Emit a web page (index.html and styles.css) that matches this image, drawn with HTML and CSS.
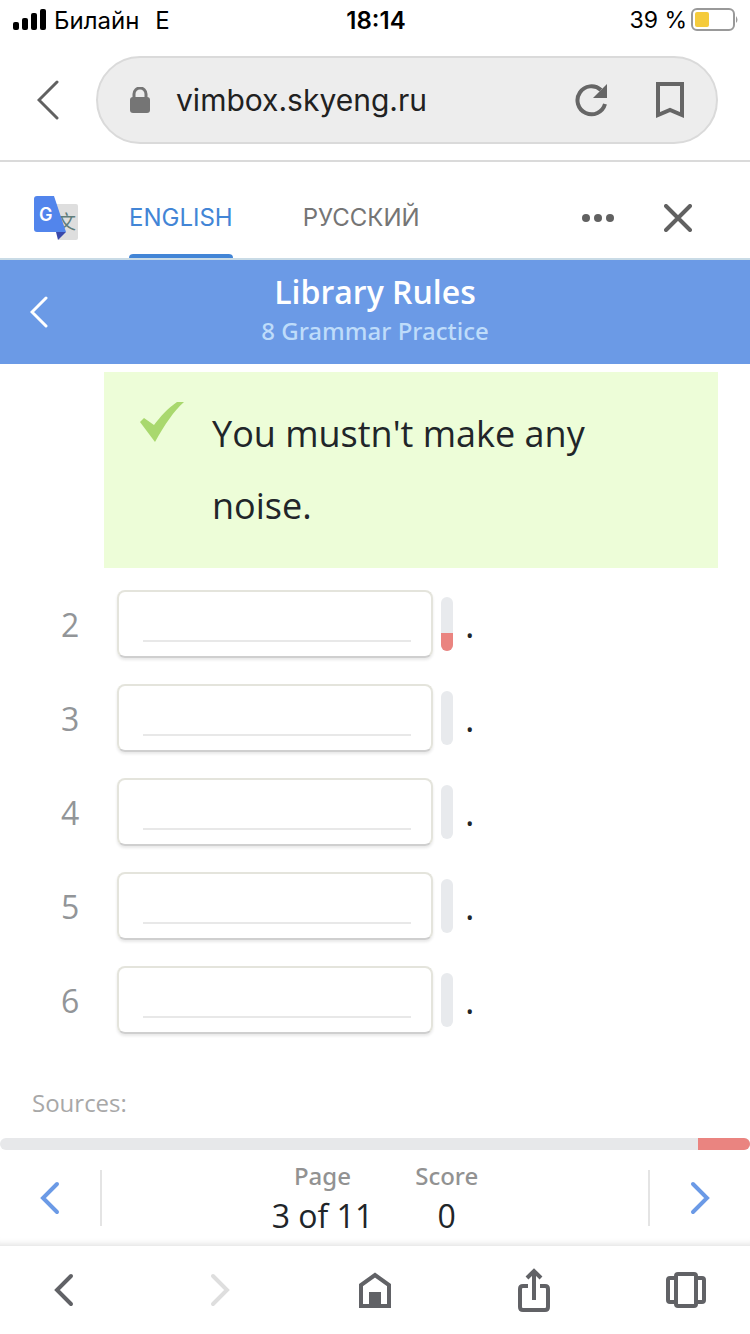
FILE: index.html
```html
<!DOCTYPE html>
<html lang="en">

<head>
    <meta charset="UTF-8">
    <meta name="viewport" content="width=device-width, initial-scale=1.0">
    <title>Library Rules</title>
    <link rel="stylesheet" href="styles.css">
</head>

<body>
    <div class="status">
        <div class="carrier">
            <svg width="34" height="22" viewBox="0 0 34 22">
                <rect x="0" y="13" width="6" height="8" rx="2" />
                <rect x="9" y="9" width="6" height="12" rx="2" />
                <rect x="18" y="4" width="6" height="17" rx="2" />
                <rect x="27" y="0" width="6" height="21" rx="2" />
            </svg>
            <span>Билайн</span>
            <span class="network">E</span>
        </div>
        <time>18:14</time>
        <div class="battery">
            <span>39 %</span>
            <svg width="48" height="24" viewBox="0 0 48 24">
                <rect x="1" y="1" width="42" height="21" rx="5" fill="none" stroke="#999" stroke-width="2" />
                <rect x="4" y="4" width="14" height="15" rx="2" fill="#f5cb3c" />
                <path d="M45 8q3 4 0 7z" fill="#999" />
            </svg>
        </div>
    </div>

    <header class="browser">
        <button class="back" aria-label="Back">
            <svg width="22" height="40" viewBox="0 0 22 40">
                <path d="M20 2 2 20l18 18" fill="none" stroke="#616161" stroke-width="3" stroke-linecap="round" />
            </svg>
        </button>
        <div class="address">
            <svg width="20" height="26" viewBox="0 0 20 26">
                <path d="M4 12V7a6 6 0 0 1 12 0v5" fill="none" stroke="#757575" stroke-width="3" />
                <rect x="0" y="10" width="20" height="16" rx="3" fill="#757575" />
            </svg>
            <input type="text" value="vimbox.skyeng.ru" aria-label="Address">
            <button aria-label="Reload">
                <svg width="34" height="34" viewBox="0 0 34 34">
                    <path d="M31 21A14 14 0 1 1 27 7" fill="none" stroke="#666" stroke-width="4" />
                    <path d="M33 1v14H19z" fill="#666" />
                </svg>
            </button>
            <button aria-label="Add bookmark">
                <svg width="28" height="36" viewBox="0 0 28 36">
                    <path d="M2 2h24v31l-12-5-12 5z" fill="none" stroke="#666" stroke-width="4" />
                </svg>
            </button>
        </div>
    </header>

    <div class="translate">
        <svg class="logo" width="44" height="44" viewBox="0 0 44 44">
            <path d="M14 8h28q2 0 2 2v32q0 2-2 2H25z" fill="#dedede" />
            <text x="23" y="33" class="logo-zh">文</text>
            <path d="M22 36h10l-8 8z" fill="#3949ab" />
            <path d="M3 0h17l12 36H3q-3 0-3-3V3q0-3 3-3z" fill="#5285ec" />
            <text x="5" y="25" class="logo-g">G</text>
        </svg>
        <nav class="langs">
            <a href="#en" class="active">ENGLISH</a>
            <a href="#ru">РУССКИЙ</a>
        </nav>
        <button class="more" aria-label="More">
            <svg width="32" height="8" viewBox="0 0 32 8" fill="#616161">
                <circle cx="4" cy="4" r="4" />
                <circle cx="16" cy="4" r="4" />
                <circle cx="28" cy="4" r="4" />
            </svg>
        </button>
        <button aria-label="Close">
            <svg width="28" height="28" viewBox="0 0 28 28">
                <path d="M2 2l24 24M26 2 2 26" stroke="#616161" stroke-width="4" stroke-linecap="round" />
            </svg>
        </button>
    </div>

    <div class="lesson">
        <a href="#lessons" aria-label="All lessons">
            <svg width="18" height="32" viewBox="0 0 18 32">
                <path d="M16 2 2 16l14 14" fill="none" stroke="#fff" stroke-width="3" stroke-linecap="round" />
            </svg>
        </a>
        <div class="titles">
            <h1>Library Rules</h1>
            <h2>8 Grammar Practice</h2>
        </div>
    </div>

    <main>
        <div class="answer">
            <svg width="44" height="40" viewBox="0 0 44 40">
                <path d="M0 20l4-4 10 7C20 15 28 6 37 0h7C34 9 25 22 15 40z" fill="#a9d86e" />
            </svg>
            <p>You mustn't make any noise.</p>
        </div>

        <div class="items">
            <div class="item">
                <label for="q2">2</label>
                <div class="field"><input type="text" id="q2"></div>
                <div class="meter"><div style="height: 34%"></div></div>
                <span>.</span>
            </div>
            <div class="item">
                <label for="q3">3</label>
                <div class="field"><input type="text" id="q3"></div>
                <div class="meter"></div>
                <span>.</span>
            </div>
            <div class="item">
                <label for="q4">4</label>
                <div class="field"><input type="text" id="q4"></div>
                <div class="meter"></div>
                <span>.</span>
            </div>
            <div class="item">
                <label for="q5">5</label>
                <div class="field"><input type="text" id="q5"></div>
                <div class="meter"></div>
                <span>.</span>
            </div>
            <div class="item">
                <label for="q6">6</label>
                <div class="field"><input type="text" id="q6"></div>
                <div class="meter"></div>
                <span>.</span>
            </div>
        </div>

        <p class="sources">Sources:</p>
    </main>

    <div class="progress"><div style="width: 7%"></div></div>

    <div class="pager">
        <button aria-label="Previous page">
            <svg width="20" height="34" viewBox="0 0 20 34">
                <path d="M17 3 3 17l14 14" fill="none" stroke="#6b9ae6" stroke-width="4" stroke-linecap="round" />
            </svg>
        </button>
        <dl>
            <div>
                <dt>Page</dt>
                <dd>3 of 11</dd>
            </div>
            <div>
                <dt>Score</dt>
                <dd>0</dd>
            </div>
        </dl>
        <button aria-label="Next page">
            <svg width="20" height="34" viewBox="0 0 20 34">
                <path d="M3 3l14 14L3 31" fill="none" stroke="#6b9ae6" stroke-width="4" stroke-linecap="round" />
            </svg>
        </button>
    </div>

    <nav class="toolbar">
        <button aria-label="Back">
            <svg width="44" height="44" viewBox="0 0 44 44">
                <path d="M29 8 15 22l14 14" stroke-linecap="round" />
            </svg>
        </button>
        <button class="off" aria-label="Forward" disabled>
            <svg width="44" height="44" viewBox="0 0 44 44">
                <path d="M15 8l14 14-14 14" stroke-linecap="round" />
            </svg>
        </button>
        <button aria-label="Home">
            <svg width="44" height="44" viewBox="0 0 44 44">
                <path d="M8 38V17L22 7l14 10v21z" />
                <path d="M16 24h12v14H16z" fill="#616266" stroke="none" />
            </svg>
        </button>
        <button aria-label="Share">
            <svg width="44" height="44" viewBox="-3 0 44 44">
                <path d="M16 18h-5q-3 0-3 3v18q0 3 3 3h22q3 0 3-3V21q0-3-3-3h-5" />
                <path d="M22 32V4M15 10l7-7 7 7" />
            </svg>
        </button>
        <button aria-label="Tabs">
            <svg width="44" height="44" viewBox="0 0 44 44">
                <rect x="12" y="6" width="20" height="32" rx="2" />
                <path d="M12 10H6q-2 0-2 2v20q0 2 2 2h6M32 10h6q2 0 2 2v20q0 2-2 2h-6" />
            </svg>
        </button>
    </nav>
</body>

</html>
```
FILE: styles.css
```css
* {
    margin: 0;
    padding: 0;
    box-sizing: border-box;
}

body {
    display: flex;
    flex-direction: column;
    min-height: 100vh;
    background-color: #fff;
    font-family: "Open Sans", "Noto Sans", sans-serif;
    color: #212529;
}

button {
    display: flex;
    flex-shrink: 0;
    justify-content: center;
    align-items: center;
    border: none;
    background: none;
}

svg {
    display: block;
    flex-shrink: 0;
}

/* status bar */
.status {
    display: grid;
    grid-template-columns: 1fr auto 1fr;
    align-items: center;
    height: 40px;
    padding: 0 11px 0 13px;
    font-family: Inter, "Noto Sans", sans-serif;
    font-size: 24px;
    color: #000;
}

.carrier,
.battery {
    display: flex;
    align-items: center;
    gap: 7px;
}

.network {
    margin-left: 9px;
}

.status time {
    font-weight: 600;
}

.battery {
    justify-content: flex-end;
    gap: 4px;
    font-size: 23px;
}

/* browser bar */
.browser {
    display: flex;
    align-items: center;
    height: 122px;
    padding-right: 32px;
    border-bottom: 2px solid #dadada;
}

.back {
    width: 96px;
    height: 88px;
}

.address {
    flex: 1;
    display: flex;
    align-items: center;
    min-width: 0;
    height: 88px;
    padding: 0 32px;
    border: 2px solid #dadada;
    border-radius: 44px;
    background-color: #ededed;
}

.address input {
    flex: 1;
    min-width: 0;
    margin-left: 26px;
    border: none;
    background: none;
    font-family: Inter, "Noto Sans", sans-serif;
    font-size: 30px;
    color: #212121;
}

.address button + button {
    margin-left: 48px;
}

/* translate bar */
.translate {
    display: flex;
    align-items: center;
    height: 98px;
    padding: 16px 58px 0 34px;
    border-bottom: 2px solid #c9dbe6;
}

.logo-g {
    font-family: Inter, sans-serif;
    font-size: 18px;
    font-weight: 600;
    fill: #fff;
}

.logo-zh {
    font-family: "Noto Sans CJK SC", sans-serif;
    font-size: 19px;
    fill: #607d7b;
}

.langs {
    flex: 1;
    display: flex;
    align-self: stretch;
    gap: 70px;
    margin-left: 51px;
}

.langs a {
    display: flex;
    flex-direction: column;
    justify-content: space-between;
    font-family: Inter, "Noto Sans", sans-serif;
    font-size: 24px;
    line-height: 80px;
    color: #757575;
    text-decoration: none;
}

.langs .active {
    color: #4285d6;
}

.langs .active::after {
    content: "";
    height: 4px;
    margin-top: -4px;
    border-radius: 4px 4px 0 0;
    background-color: #4285d6;
}

.more {
    margin-right: 50px;
}

/* lesson header */
.lesson {
    display: grid;
    grid-template-columns: 1fr auto 1fr;
    align-items: center;
    height: 104px;
    padding: 0 30px;
    background-color: #6b9ae6;
    color: #fff;
    text-align: center;
}

.titles {
    padding-bottom: 4px;
}

.lesson h1 {
    font-size: 32px;
    font-weight: 600;
    line-height: 42px;
}

.lesson h2 {
    font-family: "Noto Sans", sans-serif;
    font-size: 24px;
    font-weight: 500;
    line-height: 36px;
    color: #bedcfa;
}

/* exercise */
main {
    flex: 1;
    padding: 8px 32px 0;
}

.answer {
    display: flex;
    gap: 28px;
    margin-left: 72px;
    padding: 26px 36px;
    background-color: #edfdd8;
}

.answer svg {
    margin-top: 4px;
}

.answer p {
    font-size: 36px;
    line-height: 72px;
}

.items {
    display: flex;
    flex-direction: column;
    gap: 26px;
    margin-top: 22px;
}

.item {
    display: flex;
    align-items: center;
    height: 68px;
}

.item label {
    width: 85px;
    padding-left: 29px;
    font-size: 32px;
    color: #929598;
}

.field {
    width: 316px;
    height: 68px;
    padding: 0 20px 14px 24px;
    border: 2px solid #e4e4dc;
    border-bottom-color: #cfcfcf;
    border-radius: 8px;
    box-shadow: 0 2px 3px #e8e8e8;
}

.field input {
    display: block;
    width: 100%;
    height: 50px;
    border: none;
    border-bottom: 2px solid #e8e8e8;
    background: none;
    font-size: 32px;
}

.meter {
    display: flex;
    flex-direction: column;
    justify-content: flex-end;
    width: 12px;
    height: 54px;
    margin: 0 12px 0 8px;
    border-radius: 6px;
    background-color: #e8eaed;
    overflow: hidden;
}

.meter div {
    background-color: #ea8480;
}

.item span {
    font-size: 36px;
}

.sources {
    margin-top: 51px;
    font-size: 24px;
    line-height: 36px;
    color: #a8a8a8;
}

.progress {
    display: flex;
    justify-content: flex-end;
    height: 12px;
    border-radius: 6px;
    background-color: #e7e8ea;
    overflow: hidden;
}

.progress div {
    background-color: #ea8480;
}

/* page and score */
.pager {
    display: flex;
    align-items: center;
    height: 96px;
    box-shadow: inset 0 -8px 6px -6px #e2e2e2;
}

.pager button {
    width: 102px;
    height: 56px;
    border-right: 2px solid #e4e4e4;
}

.pager button:last-child {
    border-right: none;
    border-left: 2px solid #e4e4e4;
}

.pager dl {
    flex: 1;
    display: flex;
    justify-content: center;
    gap: 42px;
    text-align: center;
}

.pager dt {
    font-family: "Noto Sans", sans-serif;
    font-size: 24px;
    font-weight: 500;
    line-height: 36px;
    color: #929292;
}

.pager dd {
    font-size: 32px;
    line-height: 44px;
}

/* browser toolbar */
.toolbar {
    display: flex;
    justify-content: space-between;
    align-items: center;
    height: 88px;
    padding: 0 42px;
    background-color: #fff;
}

.toolbar svg {
    fill: none;
    stroke: #616266;
    stroke-width: 4px;
}

.toolbar .off svg {
    stroke: #dedede;
}
```
